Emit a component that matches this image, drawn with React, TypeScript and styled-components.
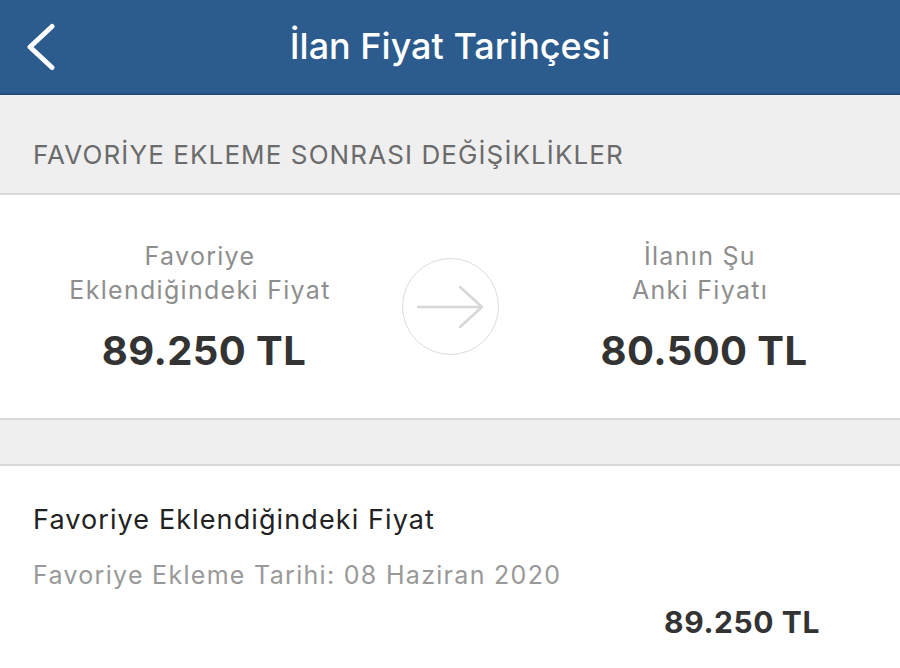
import React from "react";
import styled, { createGlobalStyle } from "styled-components";

const Global = createGlobalStyle`
  html, body { margin: 0; padding: 0; background: #efefef; }
  body { font-family: Inter, "Liberation Sans", sans-serif; -webkit-font-smoothing: antialiased; }
  * { box-sizing: border-box; }
`;

const Page = styled.div`
  width: 900px;
  height: 668px;
  overflow: hidden;
  background: #efefef;
  display: flex;
  flex-direction: column;
`;

const Header = styled.header`
  height: 95px;
  flex-shrink: 0;
  background: #2c5b8d;
  border-bottom: 2px solid #234c78;
  display: grid;
  grid-template-columns: 100px 1fr 100px;
  align-items: center;
`;

const Back = styled.button`
  background: none;
  border: none;
  padding: 0 0 0 24px;
  height: 100%;
  display: flex;
  align-items: center;
`;

const Title = styled.h1`
  margin: 0;
  text-align: center;
  color: #fff;
  font-size: 36px;
  font-weight: 500;
  letter-spacing: 0;
  padding-bottom: 2px;
`;

const SectionHead = styled.div`
  height: 100px;
  flex-shrink: 0;
  display: flex;
  align-items: center;
  padding: 20px 0 0 33px;
  color: #6b6b6b;
  font-size: 26px;
  letter-spacing: 1.1px;
  border-bottom: 2px solid #d9d9d9;
`;

const Compare = styled.section`
  height: 225px;
  flex-shrink: 0;
  background: #fff;
  border-bottom: 2px solid #d9d9d9;
  display: grid;
  grid-template-columns: 400px 100px 400px;
  align-items: center;
`;

const Side = styled.div`
  display: flex;
  flex-direction: column;
  align-items: center;
`;

const SideLabel = styled.div`
  color: #8e8e8e;
  font-size: 25px;
  line-height: 34px;
  text-align: center;
  letter-spacing: 1.3px;
`;

const BigPrice = styled.div`
  margin-top: 19px;
  padding-left: 8px;
  color: #333;
  font-size: 40px;
  font-weight: 700;
  letter-spacing: 0.4px;
`;

const Circle = styled.div`
  width: 97px;
  height: 97px;
  border-radius: 50%;
  border: 1.5px solid #dcdcdc;
  display: flex;
  align-items: center;
  justify-content: center;
  justify-self: center;
`;

const Gap = styled.div`
  height: 46px;
  flex-shrink: 0;
  border-bottom: 2px solid #d9d9d9;
`;

const Detail = styled.section`
  flex: 1;
  background: #fff;
  padding: 37px 80px 0 33px;
  display: flex;
  flex-direction: column;
`;

const DetailTitle = styled.div`
  color: #222;
  font-size: 27px;
  letter-spacing: 1.1px;
  line-height: 34px;
`;

const DetailDate = styled.div`
  margin-top: 21px;
  color: #999;
  font-size: 25px;
  letter-spacing: 1.3px;
  line-height: 34px;
`;

const DetailPrice = styled.div`
  margin-top: 12px;
  align-self: flex-end;
  color: #333;
  font-size: 30px;
  font-weight: 700;
  letter-spacing: 0.6px;
`;

export default function App() {
  return (
    <>
      <Global />
      <Page>
        <Header>
          <Back aria-label="Geri">
            <svg width="32" height="48" viewBox="0 0 32 48">
              <path d="M28 3.5 L6 24 L28 44.5" fill="none" stroke="#fff" strokeWidth="5" strokeLinecap="round" strokeLinejoin="round" />
            </svg>
          </Back>
          <Title>İlan Fiyat Tarihçesi</Title>
          <div />
        </Header>
        <SectionHead>FAVORİYE EKLEME SONRASI DEĞİŞİKLİKLER</SectionHead>
        <Compare>
          <Side>
            <SideLabel>Favoriye<br />Eklendiğindeki Fiyat</SideLabel>
            <BigPrice>89.250 TL</BigPrice>
          </Side>
          <Circle>
            <svg width="68" height="46" viewBox="0 0 68 46">
              <path d="M2 23 H66 M44 3 L66 23 L44 43" fill="none" stroke="#d7d7d7" strokeWidth="2.5" strokeLinecap="round" strokeLinejoin="round" />
            </svg>
          </Circle>
          <Side>
            <SideLabel>İlanın Şu<br />Anki Fiyatı</SideLabel>
            <BigPrice>80.500 TL</BigPrice>
          </Side>
        </Compare>
        <Gap />
        <Detail>
          <DetailTitle>Favoriye Eklendiğindeki Fiyat</DetailTitle>
          <DetailDate>Favoriye Ekleme Tarihi: 08 Haziran 2020</DetailDate>
          <DetailPrice>89.250 TL</DetailPrice>
        </Detail>
      </Page>
    </>
  );
}
